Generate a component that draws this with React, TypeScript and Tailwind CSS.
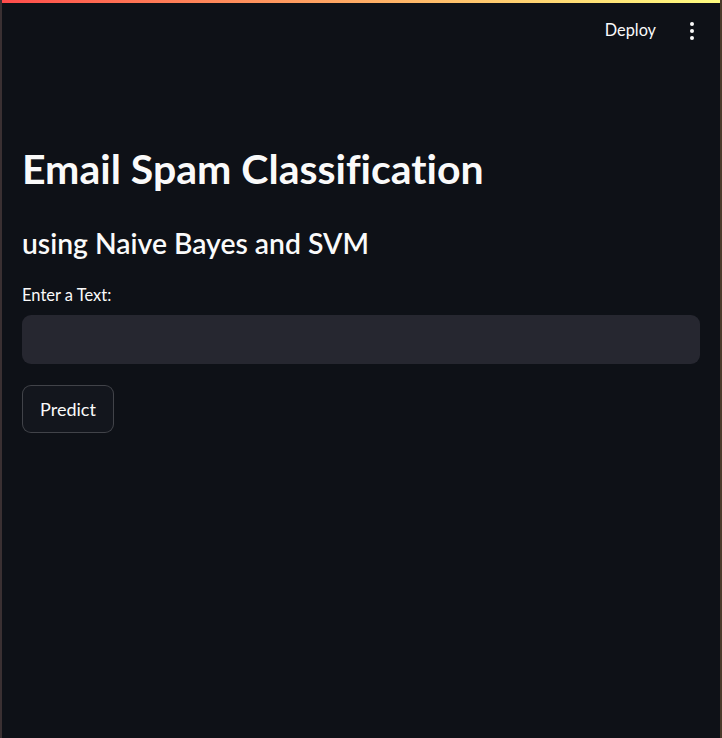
export default function App() {
  return (
    <div className="flex h-[738px] w-[722px] bg-[#2a2325]">
      <div className="w-[2px] shrink-0 bg-[#3a3032]" />
      <div
        className="flex min-w-0 flex-1 flex-col bg-[#0e1117] text-[#fafafa]"
        style={{ fontFamily: '"Lato", "Noto Sans", sans-serif' }}
      >
        <div className="h-[3px] bg-gradient-to-r from-[#ff4b4b] to-[#fffd80]" />
        <header className="flex h-[55px] items-center justify-end pr-[16px]">
          <span className="text-[16.3px]">Deploy</span>
          <button className="ml-[24px] flex h-8 w-6 flex-col items-center justify-center gap-[3px]">
            <span className="h-[4px] w-[4px] rounded-full bg-[#fafafa]" />
            <span className="h-[4px] w-[4px] rounded-full bg-[#fafafa]" />
            <span className="h-[4px] w-[4px] rounded-full bg-[#fafafa]" />
          </button>
        </header>
        <main className="flex flex-col px-[20px] pt-[88px]">
          <h1 className="text-[41px] font-bold leading-[46px]" style={{ fontVariantLigatures: "none" }}>
            Email Spam Classification
          </h1>
          <h3 className="mt-[34px] text-[28.3px] font-semibold leading-[34px]">using Naive Bayes and SVM</h3>
          <label className="mt-[25px] text-[16.5px] leading-[20px]">Enter a Text:</label>
          <input
            type="text"
            className="mt-[10px] h-[49px] w-full rounded-[9px] bg-[#262730] px-4 text-[16px] outline-none"
          />
          <button className="mt-[21px] h-[48px] w-[92px] rounded-[9px] border border-[#fafafa]/20 bg-[#13161d] text-[18px]">
            Predict
          </button>
        </main>
      </div>
      <div className="w-[2px] shrink-0 bg-[#4a3a2a]" />
    </div>
  );
}
